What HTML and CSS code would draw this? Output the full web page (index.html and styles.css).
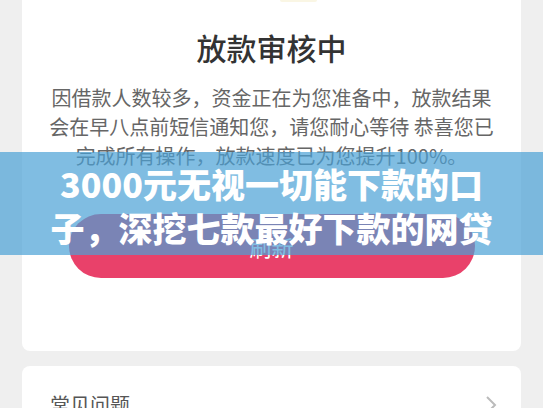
FILE: index.html
```html
<!DOCTYPE html>
<html lang="zh-CN">
<head>
    <meta charset="UTF-8">
    <meta name="viewport" content="width=device-width, initial-scale=1.0">
    <title>放款审核中</title>
    <link rel="stylesheet" href="styles.css">
</head>
<body>
    <div class="page">
        <div class="card card-main">
            <div class="icon-tail"></div>
            <h1 class="status-title">放款审核中</h1>
            <p class="status-text">
                因借款人数较多，资金正在为您准备中，放款结果<br>
                会在早八点前短信通知您，请您耐心等待 恭喜您已<br>
                完成所有操作，放款速度已为您提升100%。
            </p>
            <button class="refresh-button">刷新</button>
        </div>

        <div class="card card-faq">
            <span class="faq-label">常见问题</span>
            <svg class="faq-arrow" width="12" height="20" viewBox="0 0 12 20">
                <polyline points="2,2 10,10 2,18" fill="none" stroke="#bbbbbb" stroke-width="2"/>
            </svg>
        </div>
    </div>

    <!-- headline banner laid over the page -->
    <div class="banner">
        3000元无视一切能下款的口<br>子，深挖七款最好下款的网贷
    </div>
</body>
</html>
```

FILE: styles.css
```css
body {
    margin: 0;
    background-color: #efefef;
    font-family: "Noto Sans CJK SC", "Noto Sans", sans-serif;
}
.page {
    padding: 0 22px 0 22px;
}
.card {
    background-color: #ffffff;
    border-radius: 8px;
}
.card-main {
    margin-top: -12px;
    padding: 12px 0 73px;
    text-align: center;
}
.icon-tail {
    width: 37px;
    height: 2px;
    margin-left: 258px;
    margin-bottom: 1px;
    background-color: #faf6e4;
    border-radius: 0 0 18px 18px;
}
.status-title {
    margin: 24px 0 0;
    font-size: 30px;
    line-height: 42px;
    font-weight: 500;
    color: #333333;
}
.status-text {
    margin: 15px 0 0;
    font-size: 20px;
    line-height: 29px;
    color: #666666;
}
.refresh-button {
    display: block;
    width: 406px;
    height: 64px;
    margin: 44px auto 0;
    border: none;
    border-radius: 32px;
    background-color: #e9416a;
    color: #ffffff;
    font-family: inherit;
    font-size: 22px;
}
.card-faq {
    margin-top: 15px;
    padding: 24px 24px 24px 28px;
    display: flex;
    align-items: center;
    justify-content: space-between;
}
.faq-label {
    font-size: 20px;
    line-height: 29px;
    color: #555555;
}
.banner {
    position: absolute;
    top: 152px;
    left: 0;
    right: 0;
    height: 103px;
    box-sizing: border-box;
    padding-top: 10px;
    background-color: rgba(74, 161, 214, 0.7);
    color: #ffffff;
    font-size: 34px;
    font-weight: 900;
    line-height: 44px;
    text-align: center;
}
```
